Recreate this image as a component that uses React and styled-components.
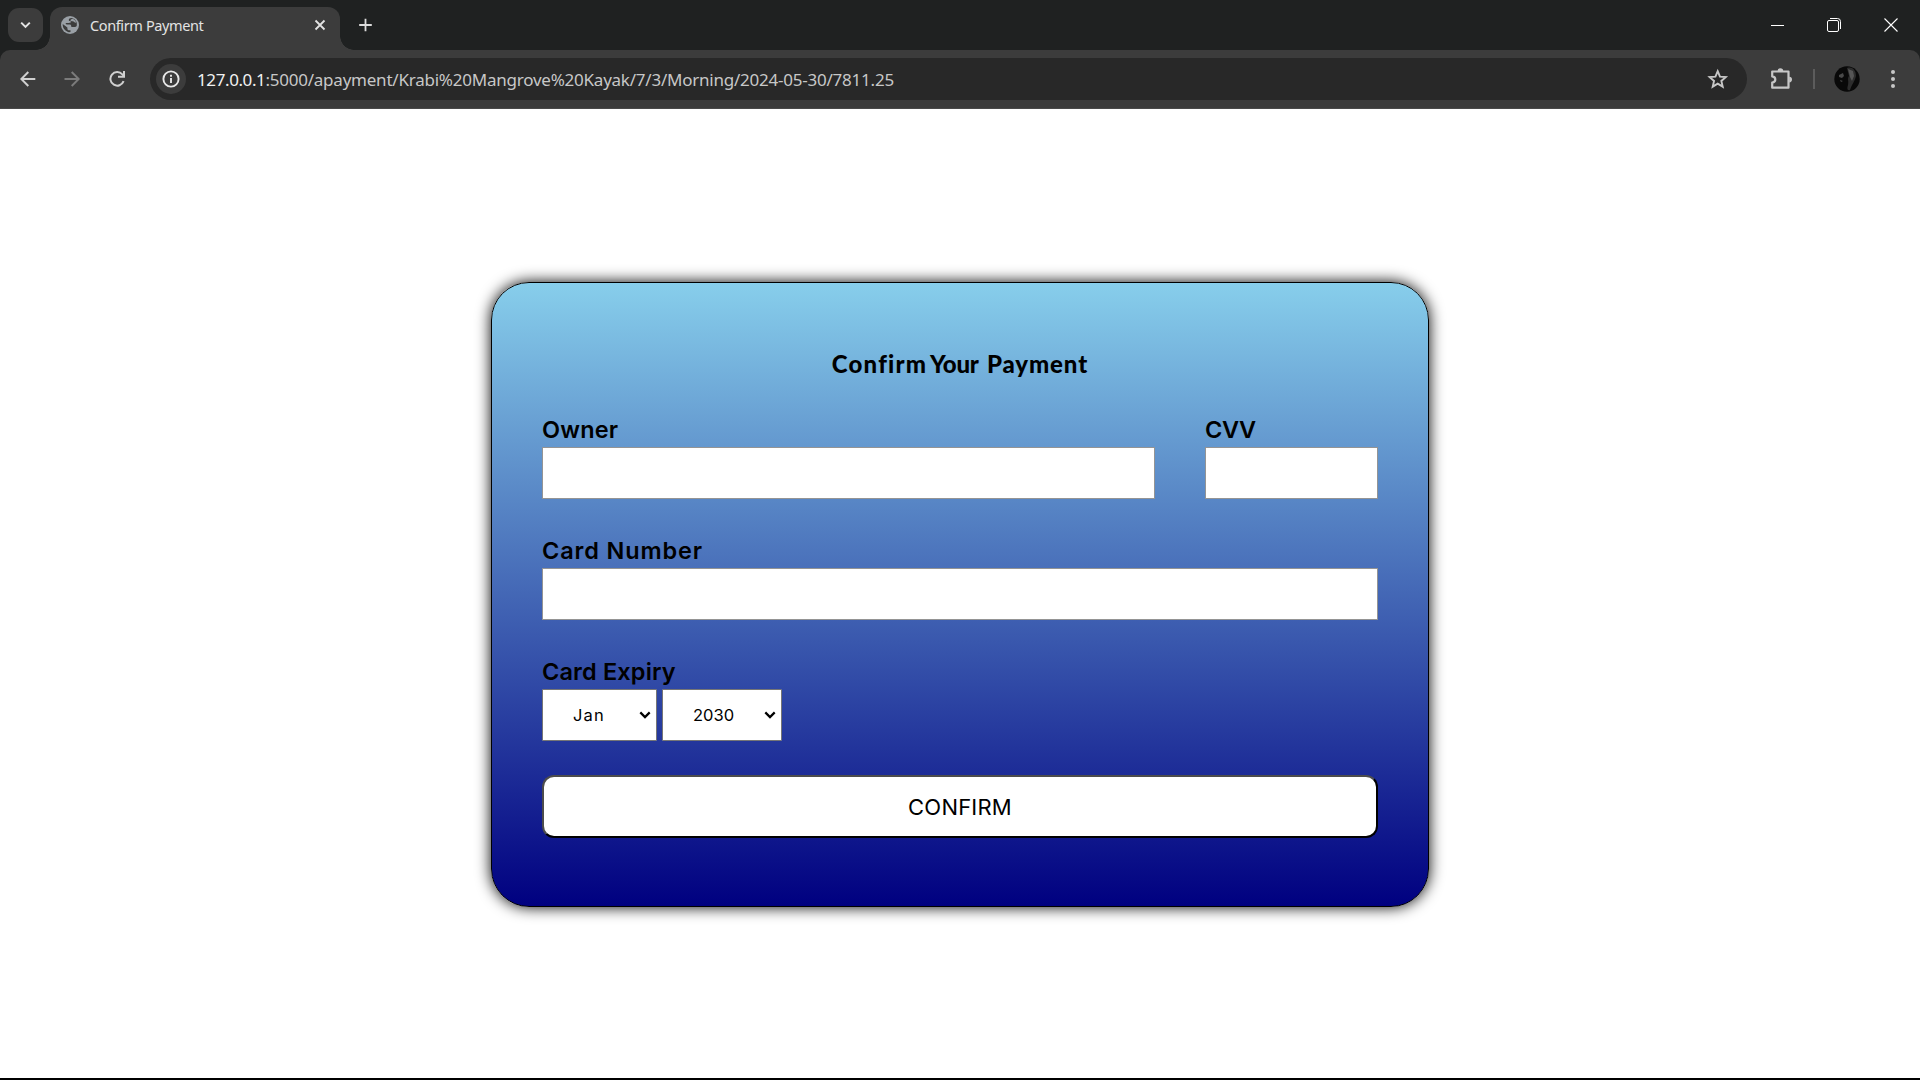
import React from "react";
import styled, { createGlobalStyle } from "styled-components";

const GlobalStyle = createGlobalStyle`
  *, *::before, *::after { box-sizing: border-box; }
  html, body { margin: 0; padding: 0; }
  body { background: #fff; overflow: hidden; }
`;

const uiFont = `"Noto Sans", "Open Sans", sans-serif`;
const formFont = `Inter, "Liberation Sans", sans-serif`;

const Window = styled.div`
  width: 1920px;
  height: 1080px;
  display: flex;
  flex-direction: column;
  background: #fff;
`;

const TabStrip = styled.header`
  height: 50px;
  flex: none;
  display: flex;
  align-items: flex-start;
  background: #1f2121;
`;

const TabSearch = styled.button`
  width: 35px;
  height: 34px;
  margin: 8px 7px 0 8px;
  padding: 0;
  border: 0;
  border-radius: 11px;
  background: #3c3c3c;
  display: grid;
  place-items: center;
`;

const Tab = styled.div`
  position: relative;
  width: 290px;
  height: 43px;
  margin-top: 7px;
  padding: 0 14px 7px 11px;
  display: flex;
  align-items: center;
  border-radius: 12px 12px 0 0;
  background: #3c3c3c;

  &::before,
  &::after {
    content: "";
    position: absolute;
    bottom: 0;
    width: 14px;
    height: 14px;
  }
  &::before {
    left: -14px;
    background: radial-gradient(circle at 0 0, transparent 13.5px, #3c3c3c 14px);
  }
  &::after {
    right: -14px;
    background: radial-gradient(circle at 100% 0, transparent 13.5px, #3c3c3c 14px);
  }
`;

const TabTitle = styled.span`
  flex: 1;
  margin-left: 11px;
  font: 400 14.5px/20px ${uiFont};
  letter-spacing: ${(p) => p.$spacing}px;
  color: #e3e3e3;
  white-space: nowrap;
`;

const NewTab = styled.div`
  margin: 18px 0 0 18px;
  height: 14px;
  display: flex;
`;

const WindowControls = styled.div`
  margin-left: auto;
  height: 50px;
  padding-right: 1px;
  display: flex;
  align-items: center;
`;

const ControlButton = styled.div`
  width: ${(p) => p.$width || 57}px;
  height: 49px;
  display: grid;
  place-items: center;
`;

const ToolbarBack = styled.div`
  flex: none;
  background: #1f2121;
`;

const Toolbar = styled.nav`
  height: 59px;
  display: flex;
  align-items: center;
  padding: 0 16px 1px 16px;
  border-radius: 10px 10px 0 0;
  border-bottom: 1px solid #4a4a4a;
  background: #3c3c3c;
`;

const NavIcon = styled.div`
  width: 24px;
  height: 24px;
  margin-right: ${(p) => p.$gap}px;
  display: grid;
  place-items: center;
`;

const AddressBar = styled.div`
  width: 1597px;
  height: 42px;
  display: flex;
  align-items: center;
  padding: 0 18px 0 6px;
  border-radius: 21px;
  background: #282828;
`;

const SiteInfo = styled.div`
  width: 30px;
  height: 30px;
  border-radius: 15px;
  background: #3c3c3c;
  display: grid;
  place-items: center;
`;

const Address = styled.span`
  flex: 1;
  margin-left: 11px;
  padding-top: 2px;
  font: 400 17px/24px ${uiFont};
  letter-spacing: -0.23px;
  color: #c7c7c7;
  white-space: nowrap;
`;

const Host = styled.span`
  letter-spacing: -0.4px;
  color: #f1f1f1;
`;

const ToolbarEnd = styled.div`
  display: flex;
  align-items: center;
  margin-left: 22px;
`;

const Divider = styled.div`
  width: 2px;
  height: 20px;
  margin: 0 19px 0 20px;
  background: #5c5c5c;
`;

const Page = styled.main`
  flex: 1;
  padding-top: 173px;
  background: #fff;
`;

const Taskbar = styled.footer`
  flex: none;
  height: 2px;
  background: #000;
`;

const Card = styled.form`
  width: 938px;
  height: 625px;
  margin: 0 auto;
  padding: 65px 50px 0;
  display: flex;
  flex-direction: column;
  border: 1px solid #000;
  border-radius: 38px;
  background: linear-gradient(skyblue, navy);
  box-shadow: 0 0 15px #000;
`;

const Heading = styled.h1`
  margin: 0;
  text-align: center;
  font: 900 24px/32px Lato, sans-serif;
  color: #000;
  white-space: nowrap;
`;

const Word = styled.span`
  letter-spacing: ${(p) => p.$spacing}px;
`;

const Row = styled.div`
  display: grid;
  grid-template-columns: ${(p) => p.$columns};
  column-gap: 50px;
  margin-top: ${(p) => p.$top}px;
`;

const Field = styled.div`
  display: flex;
  flex-direction: column;
`;

const Label = styled.label`
  height: 36px;
  font: 600 23.5px/38px ${formFont};
  letter-spacing: ${(p) => p.$spacing}px;
  color: #000;
  white-space: nowrap;
`;

const TextInput = styled.input`
  width: 100%;
  height: 52px;
  padding: 0 12px;
  border: 1px solid #949494;
  border-radius: 0;
  outline: none;
  background: #fff;
  font: 400 16px ${formFont};
`;

const Selects = styled.div`
  display: flex;
  gap: 5px;
`;

const Picker = styled.button`
  width: ${(p) => p.$width}px;
  height: 52px;
  padding: 0 5px 0 30px;
  display: flex;
  align-items: center;
  justify-content: space-between;
  border: 1px solid #767676;
  border-radius: 1px;
  background: #fff;
  font: 400 16.5px/24px ${formFont};
  letter-spacing: ${(p) => p.$spacing}px;
  color: #000;
`;

const Submit = styled.button`
  width: 100%;
  height: 63px;
  margin-top: 34px;
  padding: 0;
  border: 2px solid;
  border-color: #4c4c4c #000 #000 #4c4c4c;
  border-radius: 12px;
  background: #fff;
  font: 400 22px/30px ${formFont};
  letter-spacing: 0.2px;
  color: #000;
`;

function Chevron({ color, width = 12, stroke = 2.2 }) {
  return (
    <svg width={width} height="8" viewBox="0 0 12 8" fill="none" stroke={color} strokeWidth={stroke}>
      <path d="M1.3 1.4 6 6.1l4.7-4.7" />
    </svg>
  );
}

function Globe() {
  return (
    <svg width="18" height="18" viewBox="0 0 18 18">
      <circle cx="9" cy="9" r="9" fill="#9aa0a6" />
      <path
        d="M10.500 2c-1.700 0-2.700.8-2.700 1.900 0 .8.5 1.100 1.300 1.200.6.1.8.5.7 1-.1.7-.9.9-1.700.9H4.800c-.3.900.2 1.400 1 1.400h2.700c1.100 0 1.700.6 1.700 1.500s.4 1.200 1.200 1.200h2.300c.9 0 1.500-.4 2-1.100.9-3.600-1.200-7.200-5.200-8Z"
        fill="#3c3c3c"
      />
      <path
        d="M1.700 8.100c-.2 4.100 2.500 7.400 6.200 8.100l1.600-.2v-1.700H8.300c-1.200 0-1.900-.7-1.900-1.900v-.9L1.700 8.100Z"
        fill="#3c3c3c"
      />
      <path d="M9.300 4.300c.4-1.100 1.500-1.700 2.900-1.300 1.500.8 2.500 2 3 3.600-.9.300-1.500.1-1.900-.5-.5-.8-1.100-1-2-.9-1 .1-1.700-.2-2-.9Z" fill="#9aa0a6" />
    </svg>
  );
}

function App() {
  return (
    <Window>
      <GlobalStyle />
      <TabStrip>
        <TabSearch aria-label="Search tabs">
          <Chevron color="#e3e3e3" width={11} />
        </TabSearch>
        <Tab>
          <Globe />
          <TabTitle $spacing={-0.38}>Confirm Payment</TabTitle>
          <svg width="12" height="12" viewBox="0 0 12 12" stroke="#e3e3e3" strokeWidth="1.8">
            <path d="m1.500 1.500 9 9m0-9-9 9" />
          </svg>
        </Tab>
        <NewTab>
          <svg width="14" height="14" viewBox="0 0 14 14" stroke="#dcdcdc" strokeWidth="1.800">
            <path d="M7.500 .7v12.600M1.200 7h12.600" />
          </svg>
        </NewTab>
        <WindowControls>
          <ControlButton $width={55}>
            <svg width="13" height="13" viewBox="0 0 13 13">
              <path d="M0 6.500h13" stroke="#fff" />
            </svg>
          </ControlButton>
          <ControlButton>
            <svg width="14" height="14" viewBox="0 0 14 14" fill="none" stroke="#fff">
              <path d="M3 .5h7.500a3 3 0 0 1 3 3V11" />
              <rect x=".5" y="2.500" width="11" height="11" rx="1.500" />
            </svg>
          </ControlButton>
          <ControlButton>
            <svg width="14" height="14" viewBox="0 0 14 14" stroke="#fff" strokeWidth="1.100">
              <path d="m.5.5 13 13m0-13-13 13" />
            </svg>
          </ControlButton>
        </WindowControls>
      </TabStrip>

      <ToolbarBack>
        <Toolbar>
          <NavIcon $gap={20}>
            <svg width="16" height="16" viewBox="0 0 16 16" fill="none" stroke="#d0d0d0" strokeWidth="2">
              <path d="M15.300 8H2M8.300 1l-7 7 7 7" />
            </svg>
          </NavIcon>
          <NavIcon $gap={21}>
            <svg width="16" height="16" viewBox="0 0 16 16" fill="none" stroke="#7b7b7b" strokeWidth="2">
              <path d="M.5 8H14M7.700 1l7 7-7 7" />
            </svg>
          </NavIcon>
          <NavIcon $gap={21}>
            <svg width="16" height="16" viewBox="0 0 16 16" fill="none" stroke="#d0d0d0" strokeWidth="2">
              <path d="M14.600 10.200A6.800 6.800 0 1 1 13.300 3.300l1.300 1.600" />
              <path d="M15 0v5.800H9" />
            </svg>
          </NavIcon>
          <AddressBar>
            <SiteInfo>
              <svg width="18" height="18" viewBox="0 0 18 18" fill="none" stroke="#e8e8e8" strokeWidth="1.900">
                <circle cx="9" cy="9" r="7.600" />
                <path d="M9 8v5M9 4.800v2" />
              </svg>
            </SiteInfo>
            <Address>
              <Host>127.0.0.1</Host>:5000/apayment/Krabi%20Mangrove%20Kayak/7/3/Morning/2024-05-30/7811.25
            </Address>
            <svg width="22" height="22" viewBox="0 0 22 22" fill="none" stroke="#c7c7c7" strokeWidth="1.900">
              <path d="m10.700 3.200 2.250 5.400 5.850.5-4.450 3.850 1.350 5.700-5-3.050-5 3.050 1.350-5.700L2.600 9.100l5.850-.5 2.250-5.400Z" />
            </svg>
          </AddressBar>
          <ToolbarEnd>
            <svg width="24" height="24" viewBox="0 0 24 24" fill="none" stroke="#c7c7c7" strokeWidth="2.200" strokeLinejoin="round">
              <path d="M3.200 4.500h16.300v16.200H3.200v-5.100c2.200-.3 3.100-1.500 3.100-3.100s-.9-2.800-3.100-3.100V4.500Z" />
              <path d="M8.600 4a2.800 2.800 0 0 1 5.600 0ZM20.200 9.800a2.800 2.800 0 0 1 0 5.600Z" fill="#c7c7c7" stroke="none" />
            </svg>
            <Divider />
            <svg width="26" height="26" viewBox="0 0 26 26">
              <defs>
                <clipPath id="avatar">
                  <circle cx="13" cy="13" r="12.700" />
                </clipPath>
              </defs>
              <g clipPath="url(#avatar)">
                <path d="M0 0h26v26H0Z" fill="#090909" />
                <path d="M13 2c6-2 9 3 9 8-1 5-4 8-6 14-3 1-3-2-2-5 1-4-1-6 1-9l-2-8Z" fill="#2d2d2d" />
                <path d="m5 9 4-2 1 3-2 2-3-1ZM6 14l3 1-2 1Z" fill="#494949" />
                <path d="m14 3 5 2 1 5-2 5-2-4Z" fill="#555" />
              </g>
            </svg>
            <svg width="4" height="18" viewBox="0 0 4 18" fill="#c7c7c7" style={{ marginLeft: 31 }}>
              <circle cx="2" cy="2" r="2" />
              <circle cx="2" cy="9" r="2" />
              <circle cx="2" cy="16" r="2" />
            </svg>
          </ToolbarEnd>
        </Toolbar>
      </ToolbarBack>

      <Page>
        <Card onSubmit={(e) => e.preventDefault()}>
          <Heading>
            <Word $spacing={1.2}>Confirm</Word>
            <Word $spacing={-3}> </Word>
            <Word $spacing={-0.2}>Your</Word>
            <Word $spacing={2.5}> </Word>
            <Word $spacing={0.9}>Payment</Word>
          </Heading>
          <Row $columns="613px 173px" $top={31}>
            <Field>
              <Label htmlFor="owner" $spacing={0.2}>Owner</Label>
              <TextInput id="owner" />
            </Field>
            <Field>
              <Label htmlFor="cvv" $spacing={-0.4}>CVV</Label>
              <TextInput id="cvv" />
            </Field>
          </Row>
          <Row $columns="1fr" $top={33}>
            <Field>
              <Label htmlFor="number" $spacing={0.85}>Card Number</Label>
              <TextInput id="number" />
            </Field>
          </Row>
          <Row $columns="1fr" $top={33}>
            <Field>
              <Label as="span" $spacing={0.15}>Card Expiry</Label>
              <Selects>
                <Picker type="button" $width={115} $spacing={1.1}>
                  Jan
                  <Chevron color="#000" />
                </Picker>
                <Picker type="button" $width={120} $spacing={0}>
                  2030
                  <Chevron color="#000" />
                </Picker>
              </Selects>
            </Field>
          </Row>
          <Submit type="submit">CONFIRM</Submit>
        </Card>
      </Page>
      <Taskbar />
    </Window>
  );
}

export default App;
